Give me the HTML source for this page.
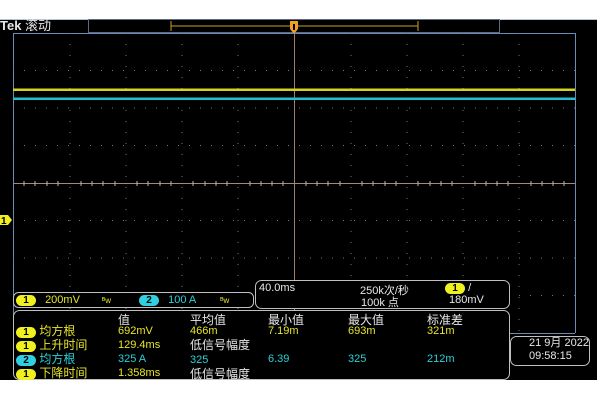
<!DOCTYPE html>
<html><head><meta charset="utf-8"><style>
*{margin:0;padding:0;box-sizing:border-box}
body{width:600px;height:400px;background:#fff;position:relative;overflow:hidden;font-family:"Liberation Sans","Noto Sans CJK SC",sans-serif;font-size:11px}
.a{position:absolute;white-space:nowrap}
.y{color:#e6e62a}.c{color:#2ad0d8}.w{color:#e8e8e8}
.b1,.b2{display:inline-block;width:20px;height:11px;border-radius:6px;text-align:center;font-size:10px;line-height:11px;color:#000;font-weight:bold}
.b1{background:#f0f020}.b2{background:#30d0e0}
</style></head><body>
<div class="a" style="left:0;top:19px;width:597px;height:361px;background:#000"></div>
<div class="a" style="left:0;top:19px;width:597px;height:1px;background:#b8c4d8"></div>
<svg class="a" style="left:0;top:0" width="600" height="400">
<g stroke="#5a6a88" fill="none"><rect x="88.5" y="19.5" width="411" height="13"/></g>
<line x1="171" y1="26" x2="418" y2="26" stroke="#c8a020"/>
<line x1="171" y1="21" x2="171" y2="31" stroke="#c8a020"/><line x1="418" y1="21" x2="418" y2="31" stroke="#c8a020"/>
<path d="M290 21h8v8l-4 5l-4-5z" fill="#f0a020"/><rect x="293" y="24" width="2" height="6" fill="#000"/>
<line x1="13.5" y1="33" x2="13.5" y2="333" stroke="#6a8ab8"/>
<line x1="575.5" y1="33" x2="575.5" y2="333" stroke="#6a8ab8"/>
<line x1="13" y1="33.5" x2="575" y2="33.5" stroke="#6a8ab8"/>
<line x1="13" y1="333.5" x2="575" y2="333.5" stroke="#6a8ab8"/>
<g stroke="#777" stroke-dasharray="1 10">
<line x1="70" y1="33" x2="70" y2="333"/><line x1="126" y1="33" x2="126" y2="333"/><line x1="182" y1="33" x2="182" y2="333"/><line x1="238" y1="33" x2="238" y2="333"/><line x1="351" y1="33" x2="351" y2="333"/><line x1="407" y1="33" x2="407" y2="333"/><line x1="463" y1="33" x2="463" y2="333"/><line x1="519" y1="33" x2="519" y2="333"/>
<line x1="13" y1="70.5" x2="575" y2="70.5"/><line x1="13" y1="108" x2="575" y2="108"/><line x1="13" y1="145.5" x2="575" y2="145.5"/><line x1="13" y1="220.5" x2="575" y2="220.5"/><line x1="13" y1="258" x2="575" y2="258"/><line x1="13" y1="295.5" x2="575" y2="295.5"/>
</g>
<line x1="294.5" y1="33" x2="294.5" y2="333" stroke="#a08060"/>
<line x1="13" y1="183.5" x2="575" y2="183.5" stroke="#a08a78"/>
<g stroke="#d0c0b0" stroke-dasharray="1 10.2"><line x1="13" y1="183.5" x2="575" y2="183.5" stroke-width="0" /></g>
<g stroke="#c8b8a8"><path d="M24 181v5M35 181v5M47 181v5M58 181v5M81 181v5M92 181v5M103 181v5M115 181v5M137 181v5M148 181v5M160 181v5M171 181v5M193 181v5M205 181v5M216 181v5M227 181v5M250 181v5M261 181v5M272 181v5M283 181v5M306 181v5M317 181v5M328 181v5M340 181v5M362 181v5M373 181v5M385 181v5M396 181v5M418 181v5M430 181v5M441 181v5M452 181v5M475 181v5M486 181v5M497 181v5M508 181v5M531 181v5M542 181v5M553 181v5M564 181v5"/></g>
<rect x="13" y="88.5" width="562" height="2.5" fill="#d4d420"/>
<rect x="13" y="97.5" width="562" height="2.5" fill="#20c0d0"/>
<path d="M0 215h8l4 5l-4 5h-8z" fill="#f0f020"/>
<text x="1" y="224" font-size="10" font-weight="bold" font-family="Liberation Sans">1</text>
<g fill="#000" stroke="#c0c0c0"><rect x="13.5" y="292.5" width="240" height="15" rx="5"/><rect x="255.5" y="280.5" width="254" height="28" rx="6"/><rect x="13.5" y="310.5" width="496" height="69" rx="6"/><rect x="510.5" y="336.5" width="79" height="29" rx="6"/></g>
</svg>
<div class="a w" style="left:0;top:19px;font-size:13px;line-height:14px"><b>Tek</b> 滚动</div>
<div class="a" style="left:16px;top:294px"><span class="b1">1</span> <span class="y" style="margin-left:6px">200mV</span><span class="y" style="margin-left:22px;font-size:8px">ᴮw</span><span class="b2" style="margin-left:28px">2</span> <span class="c" style="margin-left:6px">100 A</span><span class="y" style="margin-left:24px;font-size:8px">ᴮw</span></div>
<div class="a w" style="left:259px;top:282px">40.0ms</div>
<div class="a w" style="left:360px;top:282px">250k次/秒</div>
<div class="a w" style="left:360px;top:294px;left:361px">100k 点</div>
<div class="a" style="left:445px;top:282px"><span class="b1">1</span> <span class="w">/</span></div>
<div class="a w" style="left:449px;top:294px">180mV</div>
<div class="a w" style="left:118px;top:311px;font-size:12px">值</div>
<div class="a w" style="left:190px;top:311px;font-size:12px">平均值</div>
<div class="a w" style="left:268px;top:311px;font-size:12px">最小值</div>
<div class="a w" style="left:348px;top:311px;font-size:12px">最大值</div>
<div class="a w" style="left:427px;top:311px;font-size:12px">标准差</div>
<div class="a" style="left:16px;top:324px;line-height:14px;font-size:12px">
<div><span class="b1">1</span> <span class="y">均方根</span></div>
<div><span class="b1">1</span> <span class="y">上升时间</span></div>
<div><span class="b2">2</span> <span class="c">均方根</span></div>
<div><span class="b1">1</span> <span class="y">下降时间</span></div></div>
<div class="a y" style="left:118px;top:324px;line-height:14px">692mV<br>129.4ms<br><span class="c">325 A</span><br>1.358ms</div>
<div class="a" style="left:190px;top:324px;line-height:14px"><span class="y">466m</span><br><span class="w" style="font-size:12px">低信号幅度</span><br><span class="c">325</span><br><span class="w" style="font-size:12px">低信号幅度</span></div>
<div class="a" style="left:268px;top:324px;line-height:14px"><span class="y">7.19m</span><br>&nbsp;<br><span class="c">6.39</span></div>
<div class="a" style="left:348px;top:324px;line-height:14px"><span class="y">693m</span><br>&nbsp;<br><span class="c">325</span></div>
<div class="a" style="left:427px;top:324px;line-height:14px"><span class="y">321m</span><br>&nbsp;<br><span class="c">212m</span></div>
<div class="a w" style="left:529px;top:337px;font-size:11px;line-height:13px">21 9月 2022<br>09:58:15</div>
</body></html>
